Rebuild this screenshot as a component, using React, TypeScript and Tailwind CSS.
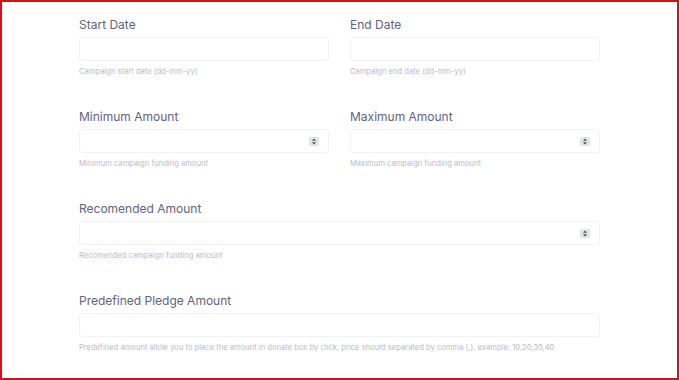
import React from 'react';

interface FieldProps {
  label: string;
  help: string;
  spinner?: boolean;
  wide?: boolean;
}

const Spinner = () => (
  <svg width="10" height="9" viewBox="0 0 10 9" className="shrink-0">
    <rect x="0" y="0" width="10" height="9" rx="1" fill="#e4e5ea" />
    <path d="M5 1.5 L7 3.8 H3 Z" fill="#4b4e5e" />
    <path d="M5 7.5 L7 5.2 H3 Z" fill="#4b4e5e" />
  </svg>
);

const Field = ({ label, help, spinner, wide }: FieldProps) => (
  <div className={wide ? 'col-span-2' : ''}>
    <label className="block text-[12px] leading-4 text-[#60637c]">{label}</label>
    <div className="mt-1 flex h-6 items-center justify-end rounded-[3px] border border-[#f2f2f5] bg-white pr-[9px]">
      {spinner && <Spinner />}
    </div>
    <p className="mt-[5px] text-[7.6px] leading-3 text-[#b9bbc8]">{help}</p>
  </div>
);

const App = () => {
  return (
    <div
      className="h-[380px] w-[679px] border-2 border-[#c8141a] bg-white"
      style={{ fontFamily: 'Inter, "Noto Sans", sans-serif' }}
    >
      <div className="grid w-[523px] grid-cols-[250px_250px] gap-x-[21px] gap-y-[31px] pl-[77px] pt-[15px]">
        <Field label="Start Date" help="Campaign start date (dd-mm-yy)" />
        <Field label="End Date" help="Campaign end date (dd-mm-yy)" />
        <Field label="Minimum Amount" help="Minimum campaign funding amount" spinner />
        <Field label="Maximum Amount" help="Maximum campaign funding amount" spinner />
        <Field label="Recomended Amount" help="Recomended campaign funding amount" spinner wide />
        <Field
          label="Predefined Pledge Amount"
          help="Predefined amount allow you to place the amount in donate box by click, price should separated by comma (,), example: 10,20,30,40"
          wide
        />
      </div>
    </div>
  );
};

export default App;
